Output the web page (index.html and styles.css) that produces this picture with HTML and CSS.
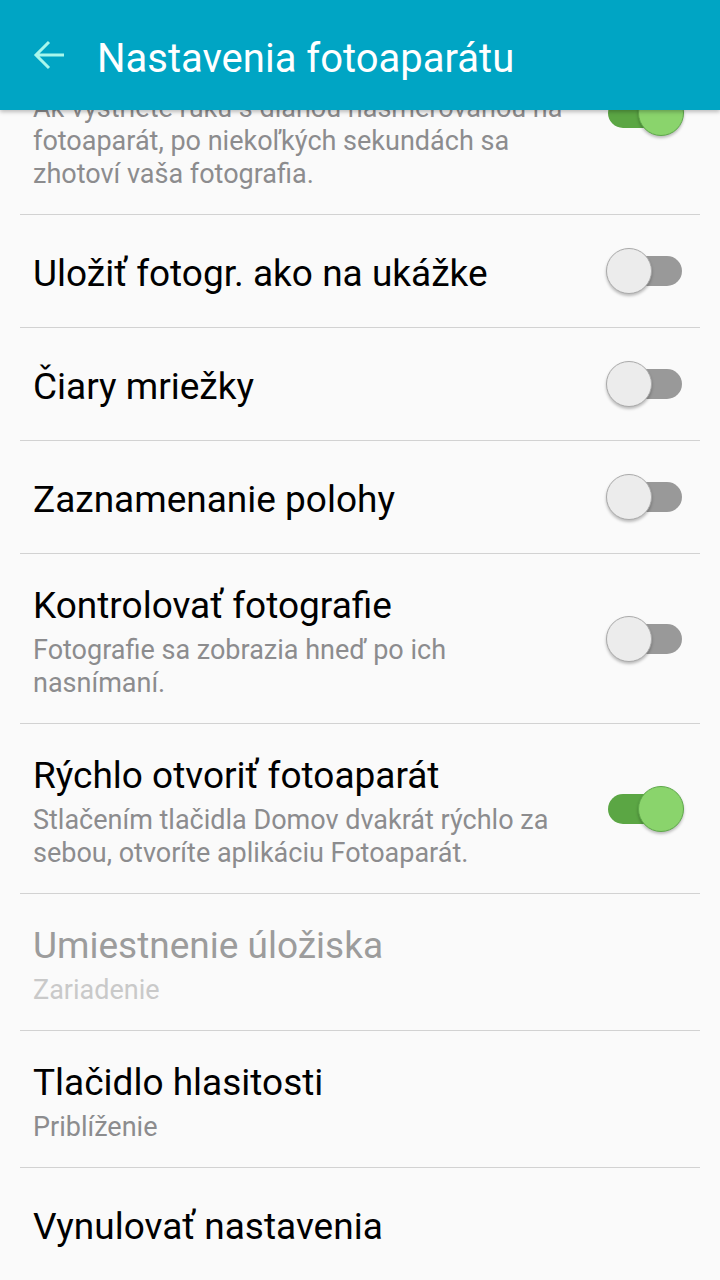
FILE: index.html
```html
<!DOCTYPE html>
<html lang="sk">
<head>
  <meta charset="UTF-8" />
  <meta name="viewport" content="width=device-width, initial-scale=1.0"/>
  <title>Nastavenia fotoaparátu</title>
  <link rel="stylesheet" href="styles.css">
</head>
<body>
  <header class="appbar">
    <svg class="back" viewBox="0 0 32 32" width="32" height="32">
      <path d="M31 16H3M16 3L3 16L16 29" fill="none" stroke="currentColor" stroke-width="3"/>
    </svg>
    <h1>Nastavenia fotoaparátu</h1>
  </header>

  <main class="list">
    <div class="row">
      <div class="text">
        <div class="title">Ovládanie gestami</div>
        <div class="sub">Ak vystriete ruku s dlaňou nasmerovanou na fotoaparát, po niekoľkých sekundách sa zhotoví vaša fotografia.</div>
      </div>
      <div class="switch on"></div>
    </div>

    <div class="row">
      <div class="text">
        <div class="title">Uložiť fotogr. ako na ukážke</div>
      </div>
      <div class="switch"></div>
    </div>

    <div class="row">
      <div class="text">
        <div class="title">Čiary mriežky</div>
      </div>
      <div class="switch"></div>
    </div>

    <div class="row">
      <div class="text">
        <div class="title">Zaznamenanie polohy</div>
      </div>
      <div class="switch"></div>
    </div>

    <div class="row">
      <div class="text">
        <div class="title">Kontrolovať fotografie</div>
        <div class="sub">Fotografie sa zobrazia hneď po ich nasnímaní.</div>
      </div>
      <div class="switch"></div>
    </div>

    <div class="row">
      <div class="text">
        <div class="title">Rýchlo otvoriť fotoaparát</div>
        <div class="sub">Stlačením tlačidla Domov dvakrát rýchlo za sebou, otvoríte aplikáciu Fotoaparát.</div>
      </div>
      <div class="switch on"></div>
    </div>

    <div class="row disabled">
      <div class="text">
        <div class="title">Umiestnenie úložiska</div>
        <div class="sub">Zariadenie</div>
      </div>
    </div>

    <div class="row">
      <div class="text">
        <div class="title">Tlačidlo hlasitosti</div>
        <div class="sub">Priblíženie</div>
      </div>
    </div>

    <div class="row last">
      <div class="text">
        <div class="title">Vynulovať nastavenia</div>
      </div>
    </div>
  </main>
</body>
</html>
```

FILE: styles.css
```css
body {
  margin: 0;
  padding: 0;
  overflow: hidden;
  height: 1280px;
  background: #fafafa;
  font-family: Roboto, "Noto Sans", sans-serif;
}

.appbar {
  position: absolute;
  top: 0;
  left: 0;
  right: 0;
  z-index: 2;
  height: 110px;
  display: flex;
  align-items: center;
  background: #00a5c4;
  box-shadow: 0 2px 4px rgba(0, 0, 0, 0.25);
}

.back {
  margin-left: 33px;
  color: #a8f7ec;
}

.appbar h1 {
  margin: 6px 0 0 32px;
  font-size: 40px;
  font-weight: 400;
  color: #fff;
}

.list {
  padding-top: 12px;
}

.row {
  display: flex;
  align-items: center;
  min-height: 113px;
  margin: 0 20px;
  padding: 28px 0 23px;
  box-sizing: border-box;
  border-bottom: 1px solid #d2d2d2;
}

.row.last {
  border-bottom: none;
}

.text {
  flex: 1;
  padding: 0 30px 0 13px;
}

.title {
  font-size: 37px;
  line-height: 48px;
  color: #000;
}

.sub {
  margin-top: 4px;
  font-size: 27px;
  line-height: 33px;
  color: #8c8c8e;
}

.disabled .title {
  color: #9c9c9c;
}

.disabled .sub {
  color: #c9c9c9;
}

.switch {
  position: relative;
  flex: none;
  width: 78px;
  height: 46px;
  margin: -5px 16px 0 0;
}

.switch::before {
  content: "";
  position: absolute;
  left: 2px;
  top: 8px;
  width: 74px;
  height: 30px;
  border-radius: 15px;
  background: #999;
}

.switch::after {
  content: "";
  position: absolute;
  left: 0;
  top: 0;
  width: 44px;
  height: 44px;
  border-radius: 50%;
  background: #ececec;
  border: 1px solid #aaa;
  box-shadow: 0 2px 3px rgba(0, 0, 0, 0.25);
}

.switch.on::before {
  background: #5ba644;
}

.switch.on::after {
  left: 32px;
  background: #8ad46c;
  border-color: #5ea84a;
}
```
